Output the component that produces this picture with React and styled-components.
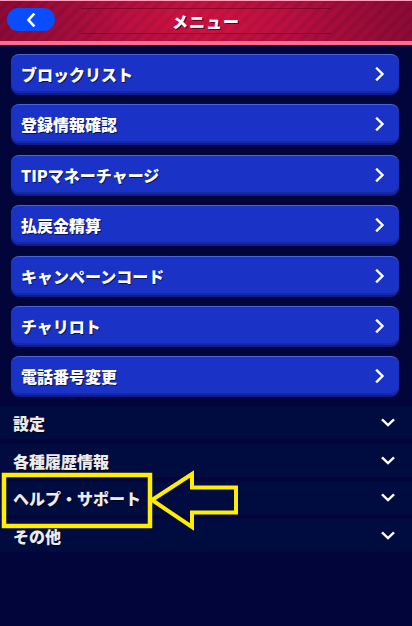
import React from "react";
import styled, { createGlobalStyle } from "styled-components";

const Global = createGlobalStyle`
  html, body { margin: 0; padding: 0; background: #01053a; }
  body { font-family: "Noto Sans CJK JP", "Noto Sans", sans-serif; }
  #root { min-height: 626px; }
`;

const Page = styled.div`
  position: relative;
  width: 412px;
  height: 626px;
  overflow: hidden;
  background: #01053a;
`;

const Header = styled.header`
  position: relative;
  height: 41px;
  display: flex;
  align-items: center;
  justify-content: center;
  background:
    repeating-linear-gradient(135deg, rgba(255,255,255,0) 0 5px, rgba(0,0,0,0.07) 5px 9px),
    linear-gradient(90deg, #8c0a36 0%, #b50f40 30%, #c5123f 50%, #b50f40 70%, #8c0a36 100%);
  border-bottom: 4px solid #ff6b98;
  box-shadow: 0 1px 0 #ff9ebc inset;
`;

const TitleBand = styled.div`
  display: flex;
  align-items: center;
  justify-content: center;
  width: 250px;
  height: 24px;
  border-top: 1px solid rgba(90, 0, 30, 0.55);
  border-bottom: 1px solid rgba(90, 0, 30, 0.55);
  background: linear-gradient(90deg, rgba(220,20,70,0) 0%, rgba(220,20,70,0.35) 50%, rgba(220,20,70,0) 100%);
`;

const Title = styled.h1`
  margin: 0;
  color: #fff;
  font-size: 16px;
  font-weight: 900;
  letter-spacing: 1px;
  text-shadow: 1px 1px 0 #5a0020;
`;

const BackButton = styled.button`
  position: absolute;
  left: 7px;
  top: 8px;
  width: 48px;
  height: 23px;
  border: none;
  border-radius: 12px;
  background: #0a4dff;
  display: flex;
  align-items: center;
  justify-content: center;
  padding: 0;
  cursor: pointer;
`;

const ButtonList = styled.nav`
  display: flex;
  flex-direction: column;
  gap: 11.4px;
  padding: 9px 13px 0 11px;
`;

const MenuButton = styled.a`
  box-sizing: border-box;
  height: 39px;
  display: flex;
  align-items: center;
  justify-content: space-between;
  padding: 0 14px 0 10px;
  border-radius: 8px;
  background: #1a33c6;
  border-top: 1px solid #4a63dc;
  box-shadow: 0 2px 0 #0d1c86, inset 0 -2px 0 #1529a8;
  color: #fff;
  font-size: 16px;
  font-weight: 900;
  text-shadow: 1px 1px 0 #0a1260;
  text-decoration: none;
`;

const Sections = styled.div`
  display: flex;
  flex-direction: column;
  gap: 4.7px;
  margin-top: 11px;
`;

const SectionRow = styled.div`
  box-sizing: border-box;
  height: 33px;
  display: flex;
  align-items: center;
  justify-content: space-between;
  padding: 0 17px 0 13px;
  background: #000b40;
  color: #ececec;
  font-size: 16px;
  font-weight: 900;
  text-shadow: 1px 1px 0 #000320;
`;

const Highlight = styled.svg`
  position: absolute;
  left: 0;
  top: 470px;
  pointer-events: none;
`;

const ChevronRight = () => (
  <svg width="10" height="14" viewBox="0 0 10 14">
    <path d="M2 1.5 L7.5 7 L2 12.5" fill="none" stroke="#fff" strokeWidth="2.4" strokeLinecap="square" />
  </svg>
);

const ChevronDown = () => (
  <svg width="14" height="10" viewBox="0 0 14 10">
    <path d="M1.8 2.2 L7 7.2 L12.2 2.2" fill="none" stroke="#fff" strokeWidth="2.3" strokeLinecap="square" />
  </svg>
);

const ChevronLeft = () => (
  <svg width="10" height="14" viewBox="0 0 10 14">
    <path d="M7.5 1.5 L2.5 7 L7.5 12.5" fill="none" stroke="#fff" strokeWidth="2.6" strokeLinecap="square" />
  </svg>
);

const buttons = [
  "ブロックリスト",
  "登録情報確認",
  "TIPマネーチャージ",
  "払戻金精算",
  "キャンペーンコード",
  "チャリロト",
  "電話番号変更",
];

const sections = ["設定", "各種履歴情報", "ヘルプ・サポート", "その他"];

export default function App() {
  return (
    <Page>
      <Global />
      <Header>
        <BackButton aria-label="戻る">
          <ChevronLeft />
        </BackButton>
        <TitleBand>
          <Title>メニュー</Title>
        </TitleBand>
      </Header>
      <ButtonList>
        {buttons.map((b) => (
          <MenuButton key={b} href="#">
            <span>{b}</span>
            <ChevronRight />
          </MenuButton>
        ))}
      </ButtonList>
      <Sections>
        {sections.map((s) => (
          <SectionRow key={s}>
            <span>{s}</span>
            <ChevronDown />
          </SectionRow>
        ))}
      </Sections>
      <Highlight width="240" height="62" viewBox="0 0 240 62">
        <rect x="4" y="5" width="146" height="51" fill="none" stroke="#ffee00" strokeWidth="4.5" />
        <path
          d="M152 30 L192 4 L192 17.5 L236 17.5 L236 42.5 L192 42.5 L192 57 Z"
          fill="none"
          stroke="#ffee00"
          strokeWidth="4"
          strokeLinejoin="miter"
        />
      </Highlight>
    </Page>
  );
}
